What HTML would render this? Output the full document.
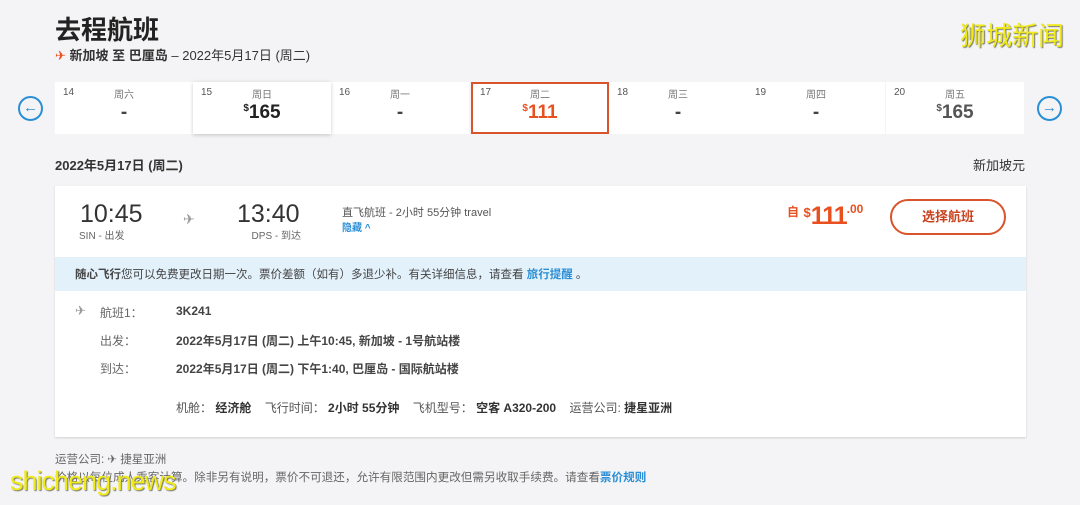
<!DOCTYPE html>
<html><head><meta charset="utf-8"><style>
*{margin:0;padding:0;box-sizing:border-box}
body{width:1080px;height:505px;background:#f4f4f6;font-family:"Liberation Sans","Noto Sans CJK SC",sans-serif;color:#333;position:relative;overflow:hidden}
.a{position:absolute;white-space:nowrap}
.cell{position:absolute;top:82px;width:138px;height:52px;background:#fff}
.cell .d{position:absolute;left:8px;top:5px;font-size:10px;color:#555}
.cell .w{position:absolute;left:0;right:0;top:4px;text-align:center;font-size:10px;color:#777}
.cell .p{position:absolute;left:0;right:0;top:20px;text-align:center;font-size:19px;font-weight:bold;color:#444}
.cell .p sup{font-size:10px;vertical-align:7px}
.circ{position:absolute;width:25px;height:25px;border:2px solid #2b8fd6;border-radius:50%;color:#2b8fd6;font-size:15px;font-weight:bold;text-align:center;line-height:20px}
.lab{font-size:12px;color:#666}
.val{font-size:12px;font-weight:bold;color:#444}
</style></head><body>
<div class="a" style="left:55px;top:10px;font-size:26px;font-weight:bold;color:#222">去程航班</div>
<div class="a" style="left:55px;top:45px;font-size:13px;color:#333"><span style="color:#e8501f">✈</span> <b>新加坡 至 巴厘岛</b> – 2022年5月17日 (周二)</div>
<div class="a" style="left:960px;top:16px;font-size:26px;color:#f0ea1a;text-shadow:1px 1px 1px #776">狮城新闻</div>

<div class="circ" style="left:18px;top:96px">←</div>
<div class="circ" style="left:1037px;top:96px">→</div>
<div class="cell" style="left:55px"><span class="d">14</span><span class="w">周六</span><span class="p">-</span></div>
<div class="cell" style="left:193px;box-shadow:0 1px 4px rgba(0,0,0,.2);z-index:2"><span class="d">15</span><span class="w">周日</span><span class="p" style="color:#222"><sup>$</sup>165</span></div>
<div class="cell" style="left:331px"><span class="d">16</span><span class="w">周一</span><span class="p">-</span></div>
<div class="cell" style="left:471px;border:2px solid #d9532b"><span class="d" style="left:7px;top:3px">17</span><span class="w" style="top:2px">周二</span><span class="p" style="color:#e8501f;top:18px"><sup>$</sup>111</span></div>
<div class="cell" style="left:609px"><span class="d">18</span><span class="w">周三</span><span class="p">-</span></div>
<div class="cell" style="left:747px"><span class="d">19</span><span class="w">周四</span><span class="p">-</span></div>
<div class="cell" style="left:886px"><span class="d">20</span><span class="w">周五</span><span class="p" style="color:#555"><sup>$</sup>165</span></div>

<div class="a" style="left:55px;top:155px;font-size:13px;font-weight:bold;color:#333">2022年5月17日 (周二)</div>
<div class="a" style="right:55px;top:155px;font-size:13px;color:#333">新加坡元</div>

<div class="a" style="left:55px;top:186px;width:971px;height:251px;background:#fff;box-shadow:0 1px 2px rgba(0,0,0,.15)">
 <div class="a" style="left:25px;top:14px;font-size:25px;color:#333">10:45</div>
 <div class="a" style="left:24px;top:41px;font-size:10px;color:#666">SIN - 出发</div>
 <div class="a" style="left:128px;top:25px;font-size:14px;color:#999">✈</div>
 <div class="a" style="left:182px;top:14px;font-size:25px;color:#333">13:40</div>
 <div class="a" style="left:188px;top:41px;font-size:10px;color:#666;width:58px;text-align:right">DPS - 到达</div>
 <div class="a" style="left:287px;top:18px;font-size:11px;color:#555">直飞航班 - 2小时 55分钟 travel</div>
 <div class="a" style="left:287px;top:33px;font-size:10px;color:#2b8fd6;font-weight:bold">隐藏 ^</div>
 <div class="a" style="left:732px;top:16px;color:#e8501f;font-weight:bold"><span style="font-size:12px;vertical-align:8px">自</span> <span style="font-size:13px;vertical-align:7px">$</span><span style="font-size:25px;letter-spacing:-1px">111</span><span style="font-size:12px;vertical-align:11px">.00</span></div>
 <div class="a" style="left:835px;top:13px;width:116px;height:36px;border:2px solid #d9532b;border-radius:18px;text-align:center;line-height:32px;font-size:13px;font-weight:bold;color:#c8431f">选择航班</div>
 <div class="a" style="left:0;top:71px;width:971px;height:34px;background:#e3f1fb;padding:9px 20px;font-size:11.5px;color:#444"><b>随心飞行</b>您可以免费更改日期一次。票价差额（如有）多退少补。有关详细信息，请查看 <b style="color:#2b8fd6">旅行提醒</b> 。</div>
 <div class="a" style="left:20px;top:117px;font-size:13px;color:#999">✈</div>
 <div class="a lab" style="left:45px;top:118px">航班1：</div><div class="a val" style="left:121px;top:118px">3K241</div>
 <div class="a lab" style="left:45px;top:146px">出发：</div><div class="a val" style="left:121px;top:146px">2022年5月17日 (周二) 上午10:45, 新加坡 - 1号航站楼</div>
 <div class="a lab" style="left:45px;top:174px">到达：</div><div class="a val" style="left:121px;top:174px">2022年5月17日 (周二) 下午1:40, 巴厘岛 - 国际航站楼</div>
 <div class="a" style="left:121px;top:213px;font-size:12px;color:#555">机舱：&nbsp;<b style="color:#333">经济舱</b>&nbsp;&nbsp;&nbsp;&nbsp;飞行时间：&nbsp;<b style="color:#333">2小时 55分钟</b>&nbsp;&nbsp;&nbsp;&nbsp;飞机型号：&nbsp;<b style="color:#333">空客 A320-200</b>&nbsp;&nbsp;&nbsp;&nbsp;运营公司: <b style="color:#333">捷星亚洲</b></div>
</div>

<div class="a" style="left:55px;top:451px;font-size:11.5px;color:#666">运营公司: ✈ 捷星亚洲</div>
<div class="a" style="left:55px;top:469px;font-size:11.6px;color:#666">价格以每位成人乘客计算。除非另有说明，票价不可退还，允许有限范围内更改但需另收取手续费。请查看<b style="color:#2b8fd6">票价规则</b></div>
<div class="a" style="left:10px;top:466px;font-size:27px;color:#f0ea1a;text-shadow:1px 1px 1px #776;letter-spacing:-1px">shicheng.news</div>
</body></html>
